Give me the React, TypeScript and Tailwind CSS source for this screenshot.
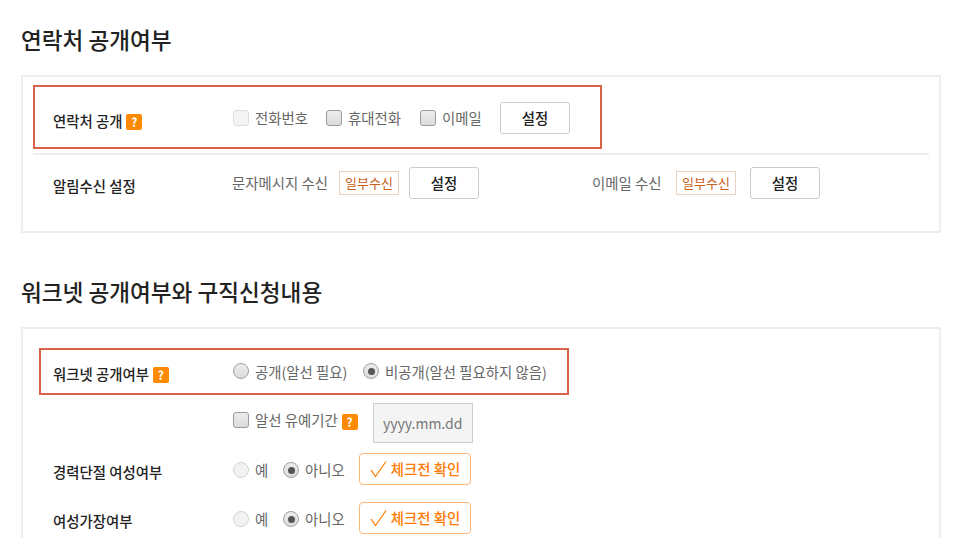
import React from "react";

const Help = () => (
  <span className="relative top-[1px] inline-flex h-[16px] w-[16px] items-center justify-center rounded-[2px] bg-[#ff8a00] text-[12px] font-bold leading-none text-white">?</span>
);

const Check = ({ off }: { off?: boolean }) => (
  <span className={`inline-block h-[16px] w-[16px] rounded-[3px] border ${off ? "border-[#dddddd] bg-[#f4f4f4]" : "border-[#9a9a9a] bg-linear-to-b from-[#ececec] to-[#dcdcdc]"}`} />
);

const Radio = ({ on, off }: { on?: boolean; off?: boolean }) => (
  <span className={`inline-flex h-[16px] w-[16px] items-center justify-center rounded-full border ${off ? "border-[#d4d4d4] bg-[#f2f2f2]" : "border-[#a0a0a0] bg-linear-to-b from-[#ececec] to-[#dcdcdc]"}`}>
    {on && <span className="h-[7px] w-[7px] rounded-full bg-[#555555]" />}
  </span>
);

const SetBtn = () => (
  <button className="flex h-[32px] w-[70px] shrink-0 items-center justify-center rounded-[3px] border border-[#cccccc] bg-white text-[14.4px] font-medium text-[#222222]">설정</button>
);

const Badge = () => (
  <span className="flex h-[24px] w-[60px] shrink-0 items-center justify-center border border-[#e6d2bf] text-[13px] text-[#c8601a]">일부수신</span>
);

const CheckBtn = () => (
  <button className="-mt-[2px] flex h-[32px] w-[112px] shrink-0 items-center justify-center gap-[4px] rounded-[4px] border border-[#ffb575] bg-white text-[14.4px] font-medium text-[#ff7a00]">
    <svg width="17" height="18" viewBox="0 0 17 18" fill="none" stroke="#ff7a00" strokeWidth="1.25"><path d="M1 10L5.5 16.5L16 1.5" /></svg>
    체크전 확인
  </button>
);

const Title = ({ children }: { children: React.ReactNode }) => (
  <h2 className="text-[22.6px] font-medium leading-[30px] text-[#222222]">{children}</h2>
);

const Label = ({ children }: { children: React.ReactNode }) => (
  <div className="flex w-[180px] shrink-0 items-center gap-[4px] text-[14.4px] font-medium text-[#222222]">{children}</div>
);

export default function App() {
  return (
    <div className="h-[538px] w-[959px] overflow-hidden bg-white pl-[21px] pt-[25px] text-[14.4px] text-[#666666]" style={{ fontFamily: '"Noto Sans CJK KR", "Noto Sans", sans-serif' }}>
      <Title>연락처 공개여부</Title>
      <section className="mt-[20px] h-[158px] w-[920px] border-2 border-[#eeeeee] px-[10px] pt-[8px]">
        <div className="flex h-[64px] w-[569px] items-center border-2 border-[#d9634a] pl-[18px]">
          <div className="mt-[8px]"><Label>연락처 공개 <Help /></Label></div>
          <div className="flex items-center pt-[2px]">
            <Check off /><span className="ml-[6px] w-[71px]">전화번호</span>
            <Check /><span className="ml-[6px] w-[72px]">휴대전화</span>
            <Check /><span className="ml-[6px] w-[58px]">이메일</span>
            <SetBtn />
          </div>
        </div>
        <div className="mt-[4px] flex h-[46px] w-[896px] items-start border-t-2 border-[#eeeeee] pl-[20px] pt-[12px]">
          <div className="flex h-[32px] items-center pt-[6px]"><Label>알림수신 설정</Label></div>
          <div className="-ml-[1px] flex w-[360px] items-center">
            <span className="w-[107px] shrink-0">문자메시지 수신</span><Badge /><span className="w-[10px]" /><SetBtn />
          </div>
          <div className="flex items-center">
            <span className="w-[84px] shrink-0">이메일 수신</span><Badge /><span className="w-[14px]" /><SetBtn />
          </div>
        </div>
      </section>
      <div className="mt-[44px]"><Title>워크넷 공개여부와 구직신청내용</Title></div>
      <section className="mt-[20px] h-[300px] w-[920px] border-2 border-[#eeeeee] px-[16px] pt-[19px]">
        <div className="flex h-[47px] w-[530px] items-center border-2 border-[#d9634a] pl-[12px]">
          <div className="mt-[5px]"><Label>워크넷 공개여부 <Help /></Label></div>
          <div className="flex items-center">
            <Radio /><span className="ml-[6px] w-[108px]">공개(알선 필요)</span>
            <Radio on /><span className="ml-[6px] whitespace-nowrap">비공개(알선 필요하지 않음)</span>
          </div>
        </div>
        <div className="mt-[8px] flex h-[42px] items-start pl-[14px]">
          <div className="w-[180px] shrink-0" />
          <div className="flex h-[34px] items-center">
            <Check /><span className="ml-[6px]">알선 유예기간</span>
            <span className="ml-[4px]"><Help /></span>
          </div>
          <span className="ml-[15px] flex h-[40px] w-[100px] items-center justify-center border border-[#cccccc] bg-[#f4f4f4] text-[14px] text-[#777777]">yyyy.mm.dd</span>
        </div>
        <div className="mt-[8px] flex h-[34px] items-center pl-[14px]">
          <div className="mt-[4px]"><Label>경력단절 여성여부</Label></div>
          <Radio off /><span className="ml-[6px] w-[28px]">예</span>
          <Radio on /><span className="ml-[6px] w-[54px]">아니오</span>
          <CheckBtn />
        </div>
        <div className="mt-[15px] flex h-[34px] items-center pl-[14px]">
          <div className="mt-[4px]"><Label>여성가장여부</Label></div>
          <Radio off /><span className="ml-[6px] w-[28px]">예</span>
          <Radio on /><span className="ml-[6px] w-[54px]">아니오</span>
          <CheckBtn />
        </div>
      </section>
    </div>
  );
}
